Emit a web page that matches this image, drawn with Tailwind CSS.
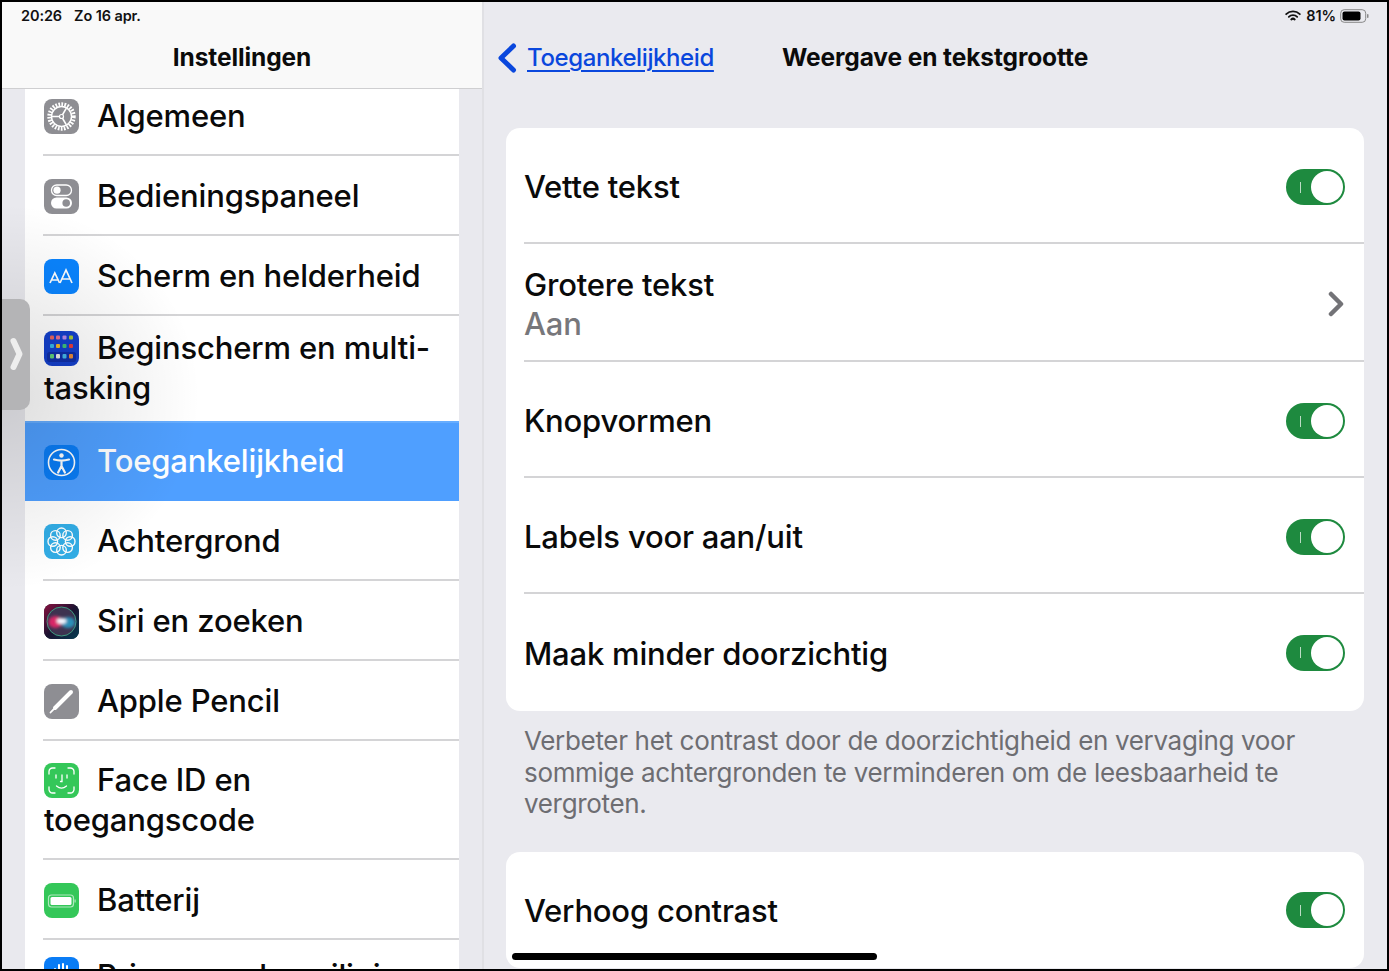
<!DOCTYPE html>
<html lang="nl">
<head>
<meta charset="utf-8">
<script src="https://cdn.jsdelivr.net/npm/@tailwindcss/browser@4"></script>
<title>Instellingen</title>
</head>
<body class="bg-black">
<div class="w-[1389px] h-[971px] border-2 border-black flex overflow-hidden relative bg-[#eaeaef] text-black font-['Inter','Liberation_Sans',sans-serif]">

  <!-- Sidebar -->
  <aside class="w-[480px] shrink-0 flex flex-col relative bg-[#e9e9ee]">
    <header class="h-[87px] shrink-0 bg-[#f9f9f9] border-b border-[#cfcfd1] relative z-10">
      <div class="h-[27px] flex items-center pl-[19px] gap-[12px] text-[14.5px] font-semibold text-[#111] tracking-[-0.1px]">
        <span>20:26</span><span>Zo 16 apr.</span>
      </div>
      <h1 class="text-center text-[24.5px] leading-[30px] font-bold mt-[13px] tracking-[-0.1px] text-[#0b0b0b]">Instellingen</h1>
    </header>
    <div class="flex-1 overflow-hidden pl-[23px] pr-[23px]">
      <div class="bg-white text-[31px] leading-[40px] tracking-[-0.15px] font-medium text-[#0a0a0a]">

        <div class="ml-[18px] h-[67px] border-b-2 border-[#d4d4d6] flex items-center">
          <div class="pb-[12px] pl-[1px]">
            <span class="inline-block align-middle w-[35px] h-[35px] rounded-[8px] bg-[#8e8e93] mr-[18px] -mt-[3px]">
              <svg viewBox="0 0 35 35" class="w-full h-full" fill="none" stroke="#fff"><circle cx="17.5" cy="17.5" r="12.2" stroke-width="4" stroke-dasharray="1.700 1.300"/><circle cx="17.5" cy="17.5" r="10" stroke-width="1.4"/><path d="M17.5 17.5H8M17.5 17.5l4.7-8.200M17.5 17.5l4.700 8.200" stroke-width="1.6"/><circle cx="17.5" cy="17.5" r="2" fill="#8e8e93" stroke-width="1.2"/></svg>
            </span>Algemeen
          </div>
        </div>

        <div class="ml-[18px] h-[80px] border-b-2 border-[#d4d4d6] flex items-center">
          <div class="pl-[1px] pt-[2px]">
            <span class="inline-block align-middle w-[35px] h-[35px] rounded-[8px] bg-[#8e8e93] mr-[18px] -mt-[5px]">
              <svg viewBox="0 0 35 35" class="w-full h-full"><rect x="7.5" y="6" width="20" height="10.5" rx="5.25" fill="none" stroke="#fff" stroke-width="1.3"/><circle cx="13" cy="11.2" r="3.6" fill="#fff"/><rect x="7" y="18.5" width="21" height="11" rx="5.5" fill="#fff"/><circle cx="22.2" cy="24" r="3.8" fill="#8e8e93"/></svg>
            </span>Bedieningspaneel
          </div>
        </div>

        <div class="ml-[18px] h-[80px] border-b-2 border-[#d4d4d6] flex items-center">
          <div class="pl-[1px] pt-[2px]">
            <span class="inline-block align-middle w-[35px] h-[35px] rounded-[8px] bg-[#0a84ff] mr-[18px] -mt-[5px]">
              <svg viewBox="0 0 35 35" class="w-full h-full" fill="none" stroke="#fff" stroke-width="1.700"><path d="M6 24l4.800-10 4.800 10M7.500 21h6.600"/><path d="M16 24l6-13 6 13M18 20h8"/></svg>
            </span>Scherm en helderheid
          </div>
        </div>

        <div class="ml-[18px] h-[105px] flex items-center">
          <div class="pr-[20px] pl-[1px] pb-[1px]">
            <span class="inline-block align-middle w-[35px] h-[35px] rounded-[8px] bg-[#1440cc] mr-[18px] -mt-[5px]">
              <svg viewBox="0 0 35 35" class="w-full h-full"><rect x="6" y="4.500" width="4" height="4" rx="1" fill="#e8655f"/><rect x="12" y="4.500" width="4" height="4" rx="1" fill="#e8708f"/><rect x="18.500" y="4.500" width="4" height="4" rx="1" fill="#b98ae8"/><rect x="25" y="4.500" width="4" height="4" rx="1" fill="#a6c93a"/><rect x="6" y="13" width="4" height="4" rx="1" fill="#35b5e8"/><rect x="12" y="13" width="4" height="4" rx="1" fill="#f0b429"/><rect x="18.500" y="13" width="4" height="4" rx="1" fill="#3fc27a"/><rect x="25" y="13" width="4" height="4" rx="1" fill="#e83b3b"/><rect x="3" y="21" width="29" height="10" rx="2.500" fill="#0f2fa8"/><rect x="6" y="23" width="4" height="4.500" rx="1" fill="#5fd07a"/><rect x="12" y="23" width="4" height="4.500" rx="1" fill="#e8e8e8"/><rect x="18.500" y="23" width="4" height="4.500" rx="1" fill="#45b8e8"/><rect x="25" y="23" width="4" height="4.500" rx="1" fill="#e88a3a"/></svg>
            </span>Beginscherm en multi-<br>tasking
          </div>
        </div>

        <div class="h-[80px] bg-[#4f9fff] border-t-2 border-[#66adff] flex items-center pl-[19px] text-white">
          <div class="pb-[2px]">
            <span class="inline-block align-middle w-[35px] h-[35px] rounded-[8px] bg-[#0a7cf5] mr-[18px] -mt-[3px]">
              <svg viewBox="0 0 35 35" class="w-full h-full" fill="none" stroke="#fff"><circle cx="17.5" cy="17.5" r="13" stroke-width="1.6"/><circle cx="17.5" cy="10.5" r="2.2" fill="#fff" stroke="none"/><path d="M10 14.5c5 1.4 10 1.4 15 0M17.5 15.5v6M17.5 21l-3.4 6.5M17.5 21l3.4 6.5" stroke-width="2.2" stroke-linecap="round"/></svg>
            </span>Toegankelijkheid
          </div>
        </div>

        <div class="ml-[18px] h-[80px] border-b-2 border-[#d4d4d6] flex items-center">
          <div class="pl-[1px] pt-[2px]">
            <span class="inline-block align-middle w-[35px] h-[35px] rounded-[8px] bg-[#32ade6] mr-[18px] -mt-[5px]">
              <svg viewBox="0 0 35 35" class="w-full h-full" fill="none" stroke="#fff" stroke-width="1.4"><circle cx="17.5" cy="8.8" r="4.8"/><circle cx="17.5" cy="26.2" r="4.8"/><circle cx="8.8" cy="17.5" r="4.8"/><circle cx="26.2" cy="17.5" r="4.8"/><circle cx="11.4" cy="11.4" r="4.8"/><circle cx="23.6" cy="11.4" r="4.8"/><circle cx="11.4" cy="23.6" r="4.8"/><circle cx="23.6" cy="23.6" r="4.8"/></svg>
            </span>Achtergrond
          </div>
        </div>

        <div class="ml-[18px] h-[80px] border-b-2 border-[#d4d4d6] flex items-center">
          <div class="pl-[1px] pt-[2px]">
            <span class="inline-block align-middle w-[35px] h-[35px] rounded-[8px] bg-[#0e1a26] mr-[18px] -mt-[5px] overflow-hidden">
              <svg viewBox="0 0 35 35" class="w-full h-full"><defs><linearGradient id="sb" x1="0" y1="0" x2="1" y2="1"><stop offset="0" stop-color="#8a1140"/><stop offset="0.5" stop-color="#1a1230"/><stop offset="1" stop-color="#053d52"/></linearGradient><filter id="sf" x="-30%" y="-30%" width="160%" height="160%"><feGaussianBlur stdDeviation="1.600"/></filter></defs><rect width="35" height="35" fill="url(#sb)"/><circle cx="17.5" cy="17.5" r="14.500" fill="#3d3350" stroke="#3f9c80" stroke-width="1"/><g filter="url(#sf)"><ellipse cx="11.500" cy="18" rx="7" ry="6" fill="#d92668"/><ellipse cx="24" cy="18.500" rx="7" ry="5.500" fill="#2a8fb8"/><ellipse cx="17.5" cy="17" rx="5" ry="3" fill="#f4f7ff"/></g></svg>
            </span>Siri en zoeken
          </div>
        </div>

        <div class="ml-[18px] h-[80px] border-b-2 border-[#d4d4d6] flex items-center">
          <div class="pl-[1px] pt-[2px]">
            <span class="inline-block align-middle w-[35px] h-[35px] rounded-[8px] bg-[#8e8e93] mr-[18px] -mt-[5px]">
              <svg viewBox="0 0 35 35" class="w-full h-full" fill="none"><path d="M11 24L27 8" stroke="#fff" stroke-width="4" stroke-linecap="round"/><path d="M6.500 28.500l3-3.200" stroke="#fff" stroke-width="1.800" stroke-linecap="round"/></svg>
            </span>Apple Pencil
          </div>
        </div>

        <div class="ml-[18px] h-[119px] border-b-2 border-[#d4d4d6] flex items-center">
          <div class="pr-[20px] pl-[1px]">
            <span class="inline-block align-middle w-[35px] h-[35px] rounded-[8px] bg-[#34c759] mr-[18px] -mt-[3px]">
              <svg viewBox="0 0 35 35" class="w-full h-full" fill="none" stroke="#fff" stroke-width="1.3" stroke-linecap="round"><path d="M5 11V8.5A3.5 3.5 0 0 1 8.5 5H11M24 5h2.5A3.5 3.5 0 0 1 30 8.5V11M30 24v2.500A3.5 3.5 0 0 1 26.500 30H24M11 30H8.500A3.500 3.500 0 0 1 5 26.500V24"/><path d="M12 12v3M23 12v3M18 12v6.500h-1.500M12.500 23c3 2.500 7 2.500 10 0"/></svg>
            </span>Face ID en<br>toegangscode
          </div>
        </div>

        <div class="ml-[18px] h-[80px] border-b-2 border-[#d4d4d6] flex items-center">
          <div class="pl-[1px] pt-[2px]">
            <span class="inline-block align-middle w-[35px] h-[35px] rounded-[8px] bg-[#34c759] mr-[18px] -mt-[5px]">
              <svg viewBox="0 0 35 35" class="w-full h-full" fill="none"><rect x="4.500" y="12" width="25" height="12" rx="3" stroke="#fff" stroke-opacity=".6" stroke-width="1.200"/><rect x="6.500" y="14" width="21" height="8" rx="1.500" fill="#fff"/><rect x="30.500" y="16.500" width="1.200" height="3" fill="#fff" fill-opacity=".6"/></svg>
            </span>Batterij
          </div>
        </div>

        <div class="ml-[18px] h-[80px] flex items-center">
          <div class="pb-[8px] pl-[1px] whitespace-nowrap">
            <span class="inline-block align-middle w-[35px] h-[35px] rounded-[8px] bg-[#0a7cf5] mr-[18px] -mt-[9px]">
              <svg viewBox="0 0 35 35" class="w-full h-full" fill="none" stroke="#fff" stroke-width="2" stroke-linecap="round"><path d="M11 12v8M15 8v12M19 7v13M23 9v11M10 20c2 7 12 9 15 0"/></svg>
            </span>Privacy en beveiliging
          </div>
        </div>
      </div>
    </div>

    <!-- Soft shade around the slide-over handle, overlays the list -->
    <div class="absolute left-0 top-[200px] w-[200px] h-[390px] pointer-events-none bg-[radial-gradient(ellipse_at_left,rgba(0,0,0,0.13),rgba(0,0,0,0)_70%)]"></div>
    <!-- Slide-over handle -->
    <div class="absolute left-0 top-[297px] w-[28px] h-[111px] bg-[#b4b4b6] rounded-r-[10px] flex items-center justify-center">
      <svg width="16" height="36" viewBox="0 0 16 36" fill="none" class="ml-[1px] -mt-[2px]"><path d="M4.500 5l6 13-6 13" stroke="#eeeeee" stroke-width="6" stroke-linecap="round" stroke-linejoin="round"/></svg>
    </div>
  </aside>

  <!-- Detail pane -->
  <main class="flex-1 min-w-0 flex flex-col border-l-2 border-[#e0e0e4]">
    <header class="h-[86px] shrink-0 relative">
      <div class="h-[27px] flex items-center justify-end gap-[5px] pr-[17px] text-[14.5px] font-semibold text-[#111] tracking-[-0.1px]">
        <svg width="16" height="12" viewBox="0 0 16 12" fill="none" stroke="#111" stroke-linecap="round"><path d="M1.200 4.200a9.800 9.800 0 0 1 13.600 0" stroke-width="1.800"/><path d="M3.800 6.900a6 6 0 0 1 8.400 0" stroke-width="1.800"/><path d="M6.300 9.400a2.500 2.500 0 0 1 3.400 0" stroke-width="2"/></svg>
        <span>81%</span>
        <svg width="30" height="14" viewBox="0 0 30 14" fill="none" class="-ml-[1px]"><rect x="0.700" y="0.700" width="25" height="12.600" rx="3.500" stroke="#888" stroke-width="1"/><rect x="2.500" y="2.500" width="18" height="9" rx="2" fill="#000"/><rect x="27" y="5" width="1.500" height="4" rx="0.700" fill="#888"/></svg>
      </div>
      <div class="flex items-center pl-[13px] mt-[12px] h-[34px]">
        <svg width="20" height="30" viewBox="0 0 20 30" fill="none" class="shrink-0"><path d="M16.500 3L4 15l12.500 12" stroke="#0a47dd" stroke-width="5" stroke-linecap="round" stroke-linejoin="round"/></svg>
        <a href="#" class="ml-[10px] text-[24px] font-medium tracking-[-0.4px] text-[#0a47dd] underline underline-offset-[4px] decoration-2">Toegankelijkheid</a>
        <h2 class="ml-[68px] pb-[2px] text-[24.5px] font-bold tracking-[-0.1px] text-[#0b0b0b]">Weergave en tekstgrootte</h2>
      </div>
    </header>

    <div class="pl-[22px] pr-[23px] pt-[40px] flex flex-col">
      <section class="bg-white rounded-[14px] pl-[18px] h-[583px] flex flex-col text-[31px] font-medium tracking-[-0.2px] text-[#0a0a0a]">
        <div class="h-[116px] pt-[4px] border-b-2 border-[#d4d4d6] flex items-center justify-between pr-[19px]">
          <span>Vette tekst</span>
          <span class="w-[59px] h-[36px] rounded-full bg-[#1e8a3f] flex items-center justify-between pl-[14px] pr-[2px]"><i class="w-px h-[11px] bg-white/70"></i><i class="w-[32px] h-[32px] rounded-full bg-white"></i></span>
        </div>
        <div class="h-[118px] pt-[4px] border-b-2 border-[#d4d4d6] flex items-center justify-between pr-[19px]">
          <div class="leading-[39px]"><div>Grotere tekst</div><div class="text-[#77777b]">Aan</div></div>
          <svg width="18" height="26" viewBox="0 0 18 26" fill="none"><path d="M4 3l10 10L4 23" stroke="#737377" stroke-width="4.500" stroke-linecap="round" stroke-linejoin="round"/></svg>
        </div>
        <div class="h-[116px] pt-[4px] border-b-2 border-[#d4d4d6] flex items-center justify-between pr-[19px]">
          <span>Knopvormen</span>
          <span class="w-[59px] h-[36px] rounded-full bg-[#1e8a3f] flex items-center justify-between pl-[14px] pr-[2px]"><i class="w-px h-[11px] bg-white/70"></i><i class="w-[32px] h-[32px] rounded-full bg-white"></i></span>
        </div>
        <div class="h-[116px] pt-[4px] border-b-2 border-[#d4d4d6] flex items-center justify-between pr-[19px]">
          <span>Labels voor aan/uit</span>
          <span class="w-[59px] h-[36px] rounded-full bg-[#1e8a3f] flex items-center justify-between pl-[14px] pr-[2px]"><i class="w-px h-[11px] bg-white/70"></i><i class="w-[32px] h-[32px] rounded-full bg-white"></i></span>
        </div>
        <div class="flex-1 flex items-center justify-between pr-[19px]">
          <span class="pt-[3px]">Maak minder doorzichtig</span>
          <span class="w-[59px] h-[36px] rounded-full bg-[#1e8a3f] flex items-center justify-between pl-[14px] pr-[2px]"><i class="w-px h-[11px] bg-white/70"></i><i class="w-[32px] h-[32px] rounded-full bg-white"></i></span>
        </div>
      </section>

      <p class="h-[141px] pt-[14px] pl-[18px] pr-[40px] text-[26px] leading-[31.500px] tracking-[-0.33px] text-[#6d6d72]">Verbeter het contrast door de doorzichtigheid en vervaging voor sommige achtergronden te verminderen om de leesbaarheid te vergroten.</p>

      <section class="bg-white rounded-[14px] pl-[18px] pr-[19px] h-[116px] flex items-center justify-between text-[31px] font-medium tracking-[-0.2px] text-[#0a0a0a]">
        <span class="pt-[3px]">Verhoog contrast</span>
        <span class="w-[59px] h-[36px] rounded-full bg-[#1e8a3f] flex items-center justify-between pl-[14px] pr-[2px]"><i class="w-px h-[11px] bg-white/70"></i><i class="w-[32px] h-[32px] rounded-full bg-white"></i></span>
      </section>
    </div>
  </main>

  <!-- Home indicator -->
  <div class="absolute left-[510px] top-[951px] w-[365px] h-[7px] rounded-full bg-black"></div>
</div>
</body>
</html>
